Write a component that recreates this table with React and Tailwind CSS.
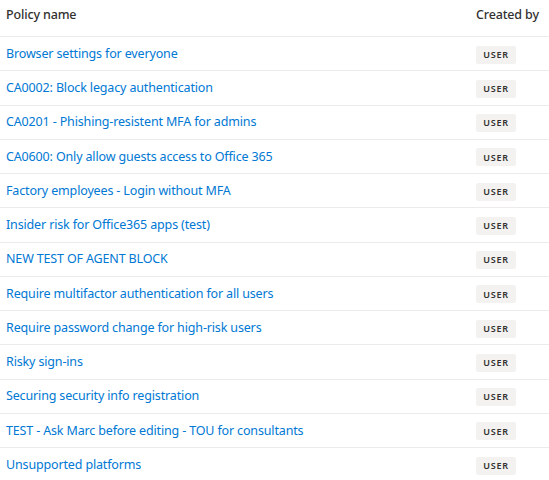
import React from "react";

const rows = [
  "Browser settings for everyone",
  "CA0002: Block legacy authentication",
  "CA0201 - Phishing-resistent MFA for admins",
  "CA0600: Only allow guests access to Office 365",
  "Factory employees - Login without MFA",
  "Insider risk for Office365 apps (test)",
  "NEW TEST OF AGENT BLOCK",
  "Require multifactor authentication for all users",
  "Require password change for high-risk users",
  "Risky sign-ins",
  "Securing security info registration",
  "TEST - Ask Marc before editing - TOU for consultants",
  "Unsupported platforms",
];

export default function App() {
  return (
    <div className="w-[549px] h-[480px] overflow-hidden bg-white" style={{ fontFamily: '"Noto Sans", sans-serif' }}>
      <div className="flex h-[37px] items-start border-b border-[#edebe9] text-[12.5px] font-medium tracking-[-0.15px] text-[#323130]">
        <div className="flex-1 pl-[6px] pt-[6px]">Policy name</div>
        <div className="w-[73px] pt-[6px]">Created by</div>
      </div>
      {rows.map((r) => (
        <div key={r} className="flex h-[34.25px] items-center border-b border-[#edebe9] text-[12.5px] tracking-[-0.15px]">
          <div className="flex-1 pl-[6px] pt-[1px] text-[#0078d4]">{r}</div>
          <div className="w-[73px] pt-[1px]">
            <span className="inline-flex h-[18px] w-[40px] items-center justify-center rounded-[2px] bg-[#f3f2f1] text-[9px] font-semibold tracking-[0.08em] text-[#323130]">
              USER
            </span>
          </div>
        </div>
      ))}
    </div>
  );
}
